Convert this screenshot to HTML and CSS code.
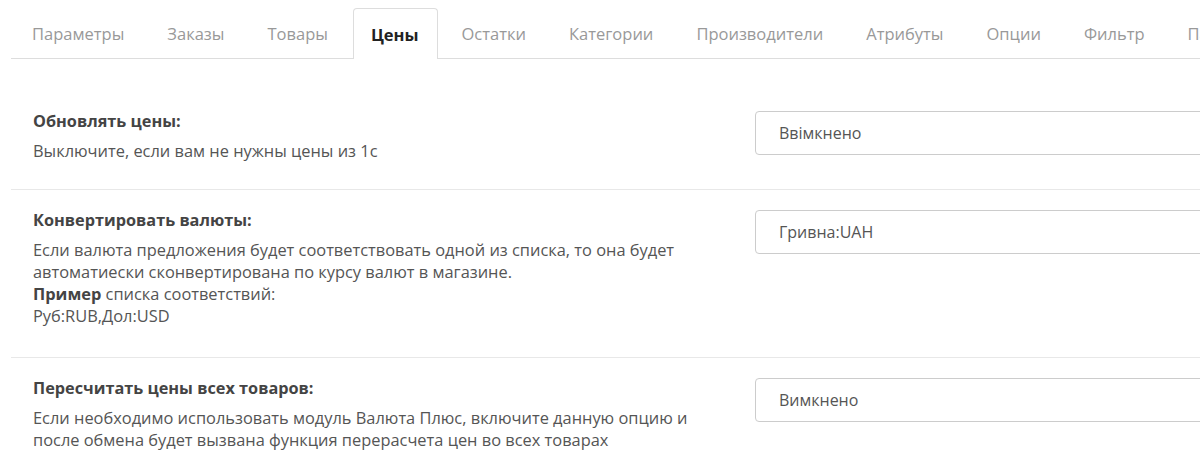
FILE: index.html
```html
<!DOCTYPE html>
<html lang="ru">
<head>
<meta charset="utf-8">
<title>Цены</title>
<link rel="stylesheet" href="styles.css">
</head>
<body>
<div class="page">
  <ul class="tabs">
    <li class="tab">Параметры</li>
    <li class="tab">Заказы</li>
    <li class="tab">Товары</li>
    <li class="tab active">Цены</li>
    <li class="tab">Остатки</li>
    <li class="tab">Категории</li>
    <li class="tab">Производители</li>
    <li class="tab">Атрибуты</li>
    <li class="tab">Опции</li>
    <li class="tab">Фильтр</li>
    <li class="tab">Пакеты</li>
  </ul>
  <div class="content">
    <div class="row">
      <div class="info">
        <div class="label">Обновлять цены:</div>
        <div class="desc">Выключите, если вам не нужны цены из 1с</div>
      </div>
      <div class="field"><div class="select">Ввімкнено</div></div>
    </div>
    <div class="row">
      <div class="info">
        <div class="label">Конвертировать валюты:</div>
        <div class="desc long">Если валюта предложения будет соответствовать одной из списка, то она будет<br>автоматиески сконвертирована по курсу валют в магазине.<br><b>Пример</b> списка соответствий:<br>Руб:RUB,Дол:USD</div>
      </div>
      <div class="field"><div class="select">Гривна:UAH</div></div>
    </div>
    <div class="row last">
      <div class="info">
        <div class="label">Пересчитать цены всех товаров:</div>
        <div class="desc">Если необходимо использовать модуль Валюта Плюс, включите данную опцию и<br>после обмена будет вызвана функция перерасчета цен во всех товарах</div>
      </div>
      <div class="field"><div class="select">Вимкнено</div></div>
    </div>
  </div>
</div>
</body>
</html>
```
FILE: styles.css
```css
html, body {
  margin: 0;
  padding: 0;
  background: #fff;
  overflow: hidden;
}
body {
  font-family: "Open Sans", "Liberation Sans", sans-serif;
  color: #555;
  width: 1200px;
  height: 471px;
}
.page {
  padding: 8px 0 0 11px;
  overflow: hidden;
}
.tabs {
  list-style: none;
  margin: 0;
  padding: 0;
  display: flex;
  border-bottom: 1px solid #ddd;
  height: 50px;
}
.tab {
  display: flex;
  align-items: center;
  flex-shrink: 0;
  height: 50px;
  padding: 0 20px;
  margin-right: 1px;
  font-size: 16.5px;
  color: #999;
  border: 1px solid transparent;
  border-bottom: none;
  border-radius: 4px 4px 0 0;
  white-space: nowrap;
  box-sizing: border-box;
}
.tab.active {
  color: #222;
  font-weight: 700;
  background: #fff;
  border-color: #ddd;
  height: 51px;
  padding: 0 18px 0 17px;
  margin-left: 3px;
  margin-right: 3px;
}
.content {
  padding-top: 32px;
}
.row {
  display: flex;
  border-bottom: 1px solid #e8e8e8;
  padding: 18px 0 27px 0;
}
.row.last {
  border-bottom: none;
}
.info {
  width: 722px;
  flex-shrink: 0;
  padding-top: 1px;
  padding-left: 22px;
  box-sizing: border-box;
}
.label {
  font-size: 16.3px;
  font-weight: 700;
  color: #444;
  line-height: 22px;
  margin-bottom: 8px;
}
.desc {
  font-size: 16.4px;
  line-height: 22px;
  color: #555;
}
.desc.long {
  margin-bottom: 3px;
}
.desc b {
  color: #444;
}
.field {
  flex: 1;
  padding-left: 22px;
  min-width: 0;
}
.select {
  width: 500px;
  height: 44px;
  box-sizing: border-box;
  border: 1px solid #ccc;
  border-radius: 4px;
  padding: 0 23px;
  display: flex;
  align-items: center;
  font-size: 16px;
  color: #555;
  margin-top: 2px;
}
```
